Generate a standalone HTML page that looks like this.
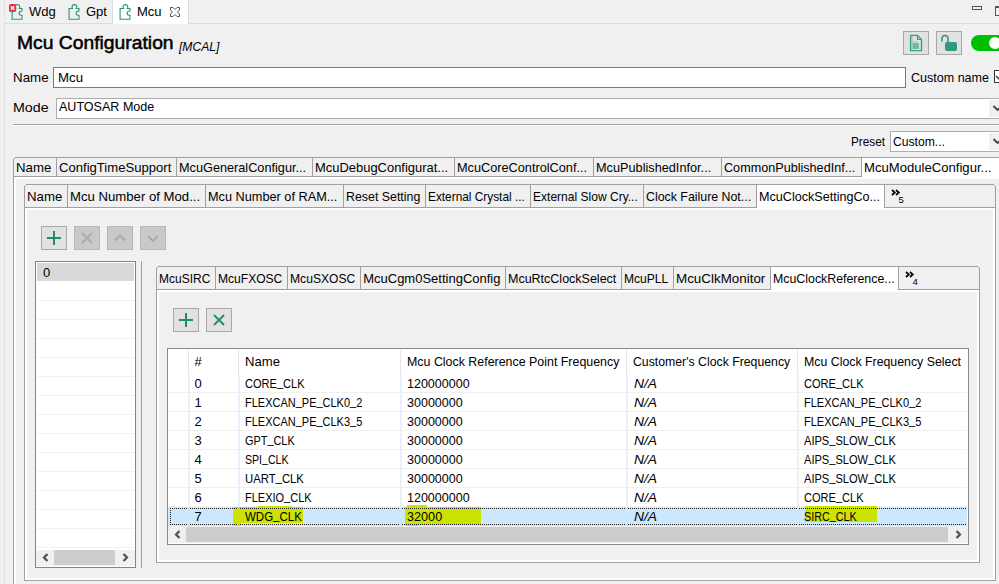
<!DOCTYPE html><html><head><meta charset="utf-8"><style>
html,body{margin:0;padding:0}
body{width:999px;height:584px;overflow:hidden;background:#f0f0f0;position:relative;font-family:"Liberation Sans",sans-serif;color:#000}
.a{position:absolute}
.t,.tab{position:absolute;white-space:nowrap;line-height:1;transform-origin:0 0}
</style></head><body>

<div class="a" style="left:4px;top:0px;width:1px;height:584px;background:#e3e3e3"></div>
<div class="a" style="left:5px;top:23px;width:994px;height:1px;background:#dcdcdc"></div>
<div class="a" style="left:113px;top:0px;width:75px;height:24px;background:#fff"></div>
<div class="a" style="left:112px;top:0px;width:1px;height:24px;background:#dcdcdc"></div>
<div class="a" style="left:188px;top:0px;width:1px;height:24px;background:#dcdcdc"></div>
<svg class="a" style="left:10px;top:3px;overflow:visible" width="16" height="18" viewBox="0 0 16 18"><path d="M2.1 16.3V5.5H5.6C5.3 5 4.8 4.5 5 3.5C5.2 2 6.2 1.6 7.4 1.6C8.6 1.6 9.6 2 9.8 3.5C10 4.5 9.5 5 9.2 5.5H12V8C10.4 8 9.1 9 9.1 10.3C9.1 11.6 10.4 12.5 12 12.5V16.3Z" fill="none" stroke="#2a9478" stroke-width="1.1"/><rect x="-1" y="1" width="7.2" height="8" rx="1.8" fill="#dc3545"/><path d="M0.9 3.3L4.3 6.7M4.3 3.3L0.9 6.7" stroke="#fff" stroke-width="1.3"/></svg>
<svg class="a" style="left:67px;top:3px;overflow:visible" width="16" height="18" viewBox="0 0 16 18"><path d="M2.1 16.3V5.5H5.6C5.3 5 4.8 4.5 5 3.5C5.2 2 6.2 1.6 7.4 1.6C8.6 1.6 9.6 2 9.8 3.5C10 4.5 9.5 5 9.2 5.5H12V8C10.4 8 9.1 9 9.1 10.3C9.1 11.6 10.4 12.5 12 12.5V16.3Z" fill="none" stroke="#2a9478" stroke-width="1.1"/></svg>
<svg class="a" style="left:118px;top:3px;overflow:visible" width="16" height="18" viewBox="0 0 16 18"><path d="M2.1 16.3V5.5H5.6C5.3 5 4.8 4.5 5 3.5C5.2 2 6.2 1.6 7.4 1.6C8.6 1.6 9.6 2 9.8 3.5C10 4.5 9.5 5 9.2 5.5H12V8C10.4 8 9.1 9 9.1 10.3C9.1 11.6 10.4 12.5 12 12.5V16.3Z" fill="none" stroke="#2a9478" stroke-width="1.1"/></svg>
<svg class="a" style="left:169px;top:6px" width="12" height="12" viewBox="0 0 12 12"><path d="M1.5 1.5H4L6 3.5L8 1.5H10.5V4L8.5 6L10.5 8V10.5H8L6 8.5L4 10.5H1.5V8L3.5 6L1.5 4Z" fill="none" stroke="#555" stroke-width="1"/></svg>
<div class="a" style="left:972px;top:6px;width:10px;height:4px;border:1px solid #555;box-sizing:border-box"></div>
<div class="a" style="left:995px;top:6px;width:10px;height:10px;border:1px solid #555;border-top-width:2px;box-sizing:border-box"></div>
<div class="a" style="left:903px;top:31px;width:26px;height:24px;background:#e1e1e1;border:1px solid #a8a8a8;box-sizing:border-box"></div>
<div class="a" style="left:936px;top:31px;width:26px;height:24px;background:#e1e1e1;border:1px solid #a8a8a8;box-sizing:border-box"></div>
<svg class="a" style="left:909px;top:34px" width="14" height="18" viewBox="0 0 14 18"><path d="M1.6 1.4H8.5L12.5 5.5V16.6H1.6Z" fill="none" stroke="#3d9f86" stroke-width="1.4"/><path d="M8.5 1.5V5.5H12.5" fill="none" stroke="#3d9f86" stroke-width="1.2"/><rect x="2.3" y="2.2" width="1.2" height="13.6" fill="#8ccab8"/><rect x="3.7" y="9" width="6.2" height="6" fill="#6fb9a4"/><rect x="2.4" y="7.3" width="6" height="1.3" fill="#9fcfc1"/></svg>
<svg class="a" style="left:940px;top:34px" width="18" height="18" viewBox="0 0 18 18"><path d="M2 7.6V4.5A3 3 0 0 1 8 4.5V8" fill="none" stroke="#2e9a80" stroke-width="1.6"/><rect x="5" y="8" width="12" height="9" rx="2" fill="#2e9a80"/></svg>
<div class="a" style="left:971px;top:35px;width:60px;height:16px;background:#00bf00;border-radius:8px"></div>
<div class="a" style="left:989px;top:37px;width:12px;height:12px;background:#fff;border-radius:6px"></div>
<div class="a" style="left:53px;top:67px;width:853px;height:21px;background:#fff;border:1px solid #7a7a7a;box-sizing:border-box"></div>
<div class="a" style="left:994px;top:70px;width:13px;height:13px;background:#fff;border:1px solid #333;box-sizing:border-box"></div>
<svg class="a" style="left:995px;top:71px" width="11" height="11"><path d="M1 5L4 8L10 2" fill="none" stroke="#333" stroke-width="1.3"/></svg>
<div class="a" style="left:56px;top:98px;width:950px;height:21px;background:#fff;border:1px solid #adadad;box-sizing:border-box"></div>
<div class="a" style="left:989px;top:100px;width:20px;height:17px;background:#f0f0f0"></div>
<svg class="a" style="left:992px;top:104px" width="10" height="9"><path d="M1.5 2L5.5 6L9.5 2" fill="none" stroke="#444" stroke-width="1.8"/></svg>
<div class="a" style="left:13px;top:124px;width:986px;height:1px;background:#a0a0a0"></div>
<div class="a" style="left:13px;top:125px;width:986px;height:1px;background:#fff"></div>
<div class="a" style="left:890px;top:131px;width:130px;height:21px;background:#fff;border:1px solid #adadad;box-sizing:border-box"></div>
<div class="a" style="left:989px;top:133px;width:20px;height:17px;background:#f0f0f0"></div>
<svg class="a" style="left:992px;top:137px" width="10" height="9"><path d="M1.5 2L5.5 6L9.5 2" fill="none" stroke="#444" stroke-width="1.8"/></svg>
<div class="a" style="left:15px;top:157px;width:994px;height:1px;background:#a0a0a0"></div>
<div class="a" style="left:14px;top:158px;width:1px;height:1px;background:#a0a0a0"></div>
<div class="a" style="left:1009px;top:158px;width:1px;height:1px;background:#a0a0a0"></div>
<div class="a" style="left:13px;top:159px;width:1px;height:442px;background:#a0a0a0"></div>
<div class="a" style="left:1010px;top:159px;width:1px;height:442px;background:#a0a0a0"></div>
<div class="a" style="left:13px;top:600px;width:998px;height:1px;background:#a0a0a0"></div>
<div class="a" style="left:14px;top:177px;width:996px;height:1px;background:#fff"></div>
<div class="a" style="left:14px;top:178px;width:996px;height:1px;background:#fff"></div>
<div class="a" style="left:14px;top:177px;width:1px;height:423px;background:#fff"></div>
<div class="a" style="left:15px;top:177px;width:1px;height:423px;background:#fff"></div>
<div class="a" style="left:1009px;top:177px;width:1px;height:423px;background:#fff"></div>
<div class="a" style="left:1008px;top:177px;width:1px;height:423px;background:#fff"></div>
<div class="a" style="left:14px;top:599px;width:996px;height:1px;background:#fff"></div>
<div class="a" style="left:14px;top:598px;width:996px;height:1px;background:#fff"></div>
<div class="a" style="left:13px;top:176px;width:848px;height:1px;background:#a0a0a0"></div>
<div class="a" style="left:1010px;top:176px;width:0px;height:1px;background:#a0a0a0"></div>
<div class="a" style="left:862px;top:158px;width:148px;height:21px;background:#fff"></div>
<div class="a" style="left:56px;top:158px;width:1px;height:19px;background:#a0a0a0"></div>
<div class="a" style="left:176px;top:158px;width:1px;height:19px;background:#a0a0a0"></div>
<div class="a" style="left:312px;top:158px;width:1px;height:19px;background:#a0a0a0"></div>
<div class="a" style="left:454px;top:158px;width:1px;height:19px;background:#a0a0a0"></div>
<div class="a" style="left:593px;top:158px;width:1px;height:19px;background:#a0a0a0"></div>
<div class="a" style="left:721px;top:158px;width:1px;height:19px;background:#a0a0a0"></div>
<div class="a" style="left:861px;top:158px;width:1px;height:19px;background:#a0a0a0"></div>
<div class="a" style="left:26px;top:184px;width:968px;height:1px;background:#a0a0a0"></div>
<div class="a" style="left:25px;top:185px;width:1px;height:1px;background:#a0a0a0"></div>
<div class="a" style="left:994px;top:185px;width:1px;height:1px;background:#a0a0a0"></div>
<div class="a" style="left:24px;top:186px;width:1px;height:395px;background:#a0a0a0"></div>
<div class="a" style="left:995px;top:186px;width:1px;height:395px;background:#a0a0a0"></div>
<div class="a" style="left:24px;top:580px;width:972px;height:1px;background:#a0a0a0"></div>
<div class="a" style="left:25px;top:208px;width:970px;height:1px;background:#fff"></div>
<div class="a" style="left:25px;top:209px;width:970px;height:1px;background:#fff"></div>
<div class="a" style="left:25px;top:208px;width:1px;height:372px;background:#fff"></div>
<div class="a" style="left:26px;top:208px;width:1px;height:372px;background:#fff"></div>
<div class="a" style="left:994px;top:208px;width:1px;height:372px;background:#fff"></div>
<div class="a" style="left:993px;top:208px;width:1px;height:372px;background:#fff"></div>
<div class="a" style="left:25px;top:579px;width:970px;height:1px;background:#fff"></div>
<div class="a" style="left:25px;top:578px;width:970px;height:1px;background:#fff"></div>
<div class="a" style="left:24px;top:207px;width:732px;height:1px;background:#a0a0a0"></div>
<div class="a" style="left:884px;top:207px;width:111px;height:1px;background:#a0a0a0"></div>
<div class="a" style="left:757px;top:185px;width:127px;height:25px;background:#fff"></div>
<div class="a" style="left:67px;top:185px;width:1px;height:23px;background:#a0a0a0"></div>
<div class="a" style="left:205px;top:185px;width:1px;height:23px;background:#a0a0a0"></div>
<div class="a" style="left:343px;top:185px;width:1px;height:23px;background:#a0a0a0"></div>
<div class="a" style="left:425px;top:185px;width:1px;height:23px;background:#a0a0a0"></div>
<div class="a" style="left:530px;top:185px;width:1px;height:23px;background:#a0a0a0"></div>
<div class="a" style="left:643px;top:185px;width:1px;height:23px;background:#a0a0a0"></div>
<div class="a" style="left:756px;top:185px;width:1px;height:23px;background:#a0a0a0"></div>
<div class="a" style="left:884px;top:185px;width:1px;height:23px;background:#a0a0a0"></div>
<svg class="a" style="left:891px;top:189px" width="10" height="7"><path d="M1 1L3.8 3.5L1 6M5 1L7.8 3.5L5 6" fill="none" stroke="#000" stroke-width="1.7"/></svg>
<div class="a" style="left:41px;top:226px;width:26px;height:24px;background:#e1e1e1;border:1px solid #a8a8a8;box-sizing:border-box"></div>
<svg class="a" style="left:41px;top:226px" width="26" height="24"><path d="M13 5V19M6 12H20" stroke="#1f8c70" stroke-width="2"/></svg>
<div class="a" style="left:74px;top:226px;width:26px;height:24px;background:#c9c9c9;border:1px solid #b8b8b8;box-sizing:border-box"></div>
<svg class="a" style="left:74px;top:226px" width="26" height="24"><path d="M8 7L18 17M18 7L8 17" stroke="#ababab" stroke-width="1.8"/></svg>
<div class="a" style="left:107px;top:226px;width:26px;height:24px;background:#c9c9c9;border:1px solid #b8b8b8;box-sizing:border-box"></div>
<svg class="a" style="left:107px;top:226px" width="26" height="24"><path d="M8 14.5L13 9.5L18 14.5" fill="none" stroke="#ababab" stroke-width="2"/></svg>
<div class="a" style="left:140px;top:226px;width:26px;height:24px;background:#c9c9c9;border:1px solid #b8b8b8;box-sizing:border-box"></div>
<svg class="a" style="left:140px;top:226px" width="26" height="24"><path d="M8 10L13 15L18 10" fill="none" stroke="#ababab" stroke-width="2"/></svg>
<div class="a" style="left:35px;top:261px;width:101px;height:307px;background:#fff;border:1px solid #7f858e;box-sizing:border-box"></div>
<div class="a" style="left:37px;top:263px;width:97px;height:18px;background:#d9d9d9"></div>
<div class="a" style="left:37px;top:300px;width:97px;height:1px;background:#f0f0f0"></div>
<div class="a" style="left:37px;top:319px;width:97px;height:1px;background:#f0f0f0"></div>
<div class="a" style="left:37px;top:338px;width:97px;height:1px;background:#f0f0f0"></div>
<div class="a" style="left:37px;top:357px;width:97px;height:1px;background:#f0f0f0"></div>
<div class="a" style="left:37px;top:376px;width:97px;height:1px;background:#f0f0f0"></div>
<div class="a" style="left:37px;top:395px;width:97px;height:1px;background:#f0f0f0"></div>
<div class="a" style="left:37px;top:414px;width:97px;height:1px;background:#f0f0f0"></div>
<div class="a" style="left:37px;top:433px;width:97px;height:1px;background:#f0f0f0"></div>
<div class="a" style="left:37px;top:452px;width:97px;height:1px;background:#f0f0f0"></div>
<div class="a" style="left:37px;top:471px;width:97px;height:1px;background:#f0f0f0"></div>
<div class="a" style="left:37px;top:490px;width:97px;height:1px;background:#f0f0f0"></div>
<div class="a" style="left:37px;top:509px;width:97px;height:1px;background:#f0f0f0"></div>
<div class="a" style="left:37px;top:528px;width:97px;height:1px;background:#f0f0f0"></div>
<div class="a" style="left:37px;top:547px;width:97px;height:1px;background:#f0f0f0"></div>
<div class="a" style="left:36px;top:550px;width:99px;height:16px;background:#f0f0f0"></div>
<div class="a" style="left:54px;top:550px;width:61px;height:15px;background:#cdcdcd"></div>
<svg class="a" style="left:36px;top:549px" width="18" height="17"><path d="M11.5 5L8 8.5L11.5 12" fill="none" stroke="#505050" stroke-width="2.2"/></svg>
<svg class="a" style="left:117px;top:549px" width="18" height="17"><path d="M6.5 5L10 8.5L6.5 12" fill="none" stroke="#505050" stroke-width="2.2"/></svg>
<div class="a" style="left:141px;top:261px;width:1px;height:307px;background:#a0a0a0"></div>
<div class="a" style="left:158px;top:266px;width:820px;height:1px;background:#a0a0a0"></div>
<div class="a" style="left:157px;top:267px;width:1px;height:1px;background:#a0a0a0"></div>
<div class="a" style="left:978px;top:267px;width:1px;height:1px;background:#a0a0a0"></div>
<div class="a" style="left:156px;top:268px;width:1px;height:295px;background:#a0a0a0"></div>
<div class="a" style="left:979px;top:268px;width:1px;height:295px;background:#a0a0a0"></div>
<div class="a" style="left:156px;top:562px;width:824px;height:1px;background:#a0a0a0"></div>
<div class="a" style="left:157px;top:290px;width:822px;height:1px;background:#fff"></div>
<div class="a" style="left:157px;top:291px;width:822px;height:1px;background:#fff"></div>
<div class="a" style="left:157px;top:290px;width:1px;height:272px;background:#fff"></div>
<div class="a" style="left:158px;top:290px;width:1px;height:272px;background:#fff"></div>
<div class="a" style="left:978px;top:290px;width:1px;height:272px;background:#fff"></div>
<div class="a" style="left:977px;top:290px;width:1px;height:272px;background:#fff"></div>
<div class="a" style="left:157px;top:561px;width:822px;height:1px;background:#fff"></div>
<div class="a" style="left:157px;top:560px;width:822px;height:1px;background:#fff"></div>
<div class="a" style="left:156px;top:289px;width:614px;height:1px;background:#a0a0a0"></div>
<div class="a" style="left:898px;top:289px;width:81px;height:1px;background:#a0a0a0"></div>
<div class="a" style="left:771px;top:267px;width:127px;height:25px;background:#fff"></div>
<div class="a" style="left:215px;top:267px;width:1px;height:23px;background:#a0a0a0"></div>
<div class="a" style="left:287px;top:267px;width:1px;height:23px;background:#a0a0a0"></div>
<div class="a" style="left:360px;top:267px;width:1px;height:23px;background:#a0a0a0"></div>
<div class="a" style="left:505px;top:267px;width:1px;height:23px;background:#a0a0a0"></div>
<div class="a" style="left:621px;top:267px;width:1px;height:23px;background:#a0a0a0"></div>
<div class="a" style="left:673px;top:267px;width:1px;height:23px;background:#a0a0a0"></div>
<div class="a" style="left:770px;top:267px;width:1px;height:23px;background:#a0a0a0"></div>
<div class="a" style="left:898px;top:267px;width:1px;height:23px;background:#a0a0a0"></div>
<svg class="a" style="left:905px;top:271px" width="10" height="7"><path d="M1 1L3.8 3.5L1 6M5 1L7.8 3.5L5 6" fill="none" stroke="#000" stroke-width="1.7"/></svg>
<div class="a" style="left:173px;top:308px;width:26px;height:24px;background:#e1e1e1;border:1px solid #a8a8a8;box-sizing:border-box"></div>
<svg class="a" style="left:173px;top:308px" width="26" height="24"><path d="M13 5V19M6 12H20" stroke="#1f8c70" stroke-width="2"/></svg>
<div class="a" style="left:206px;top:308px;width:26px;height:24px;background:#e1e1e1;border:1px solid #a8a8a8;box-sizing:border-box"></div>
<svg class="a" style="left:206px;top:308px" width="26" height="24"><path d="M8 7L18 17M18 7L8 17" stroke="#1f8c70" stroke-width="1.8"/></svg>
<div class="a" style="left:167px;top:348px;width:802px;height:197px;background:#fff;border:1px solid #828790;box-sizing:border-box"></div>
<div class="a" style="left:188px;top:350px;width:1px;height:24px;background:#e5e5e5"></div>
<div class="a" style="left:238px;top:350px;width:1px;height:24px;background:#e5e5e5"></div>
<div class="a" style="left:400px;top:350px;width:1px;height:24px;background:#e5e5e5"></div>
<div class="a" style="left:626px;top:350px;width:1px;height:24px;background:#e5e5e5"></div>
<div class="a" style="left:797px;top:350px;width:1px;height:24px;background:#e5e5e5"></div>
<div class="a" style="left:168px;top:392px;width:799px;height:1px;background:#f0f0f0"></div>
<div class="a" style="left:168px;top:411px;width:799px;height:1px;background:#f0f0f0"></div>
<div class="a" style="left:168px;top:430px;width:799px;height:1px;background:#f0f0f0"></div>
<div class="a" style="left:168px;top:449px;width:799px;height:1px;background:#f0f0f0"></div>
<div class="a" style="left:168px;top:468px;width:799px;height:1px;background:#f0f0f0"></div>
<div class="a" style="left:168px;top:487px;width:799px;height:1px;background:#f0f0f0"></div>
<div class="a" style="left:168px;top:506px;width:799px;height:1px;background:#f0f0f0"></div>
<div class="a" style="left:188px;top:374px;width:1px;height:151px;background:#e8f1fb"></div>
<div class="a" style="left:189px;top:374px;width:1px;height:151px;background:#f0f0f0"></div>
<div class="a" style="left:238px;top:374px;width:1px;height:151px;background:#e8f1fb"></div>
<div class="a" style="left:239px;top:374px;width:1px;height:151px;background:#f0f0f0"></div>
<div class="a" style="left:400px;top:374px;width:1px;height:151px;background:#e8f1fb"></div>
<div class="a" style="left:401px;top:374px;width:1px;height:151px;background:#f0f0f0"></div>
<div class="a" style="left:626px;top:374px;width:1px;height:151px;background:#e8f1fb"></div>
<div class="a" style="left:627px;top:374px;width:1px;height:151px;background:#f0f0f0"></div>
<div class="a" style="left:797px;top:374px;width:1px;height:151px;background:#e8f1fb"></div>
<div class="a" style="left:798px;top:374px;width:1px;height:151px;background:#f0f0f0"></div>
<div class="a" style="left:168px;top:507px;width:799px;height:19px;background:#cce8ff"></div>
<div class="a" style="left:233px;top:507px;width:8px;height:19px;background:#cce200"></div>
<div class="a" style="left:240px;top:507px;width:63px;height:16px;background:#cce200"></div>
<div class="a" style="left:258px;top:506px;width:34px;height:2px;background:#cce200"></div>
<div class="a" style="left:405px;top:507px;width:76px;height:18px;background:#cce200"></div>
<div class="a" style="left:407px;top:505px;width:20px;height:2px;background:#cce200"></div>
<div class="a" style="left:406px;top:525px;width:12px;height:1px;background:#cce200"></div>
<div class="a" style="left:805px;top:506px;width:72px;height:16px;background:#cce200"></div>
<div class="a" style="left:170px;top:508px;width:18px;height:1px;background-image:linear-gradient(90deg,#222 50%,transparent 50%);background-size:2px 1px"></div>
<div class="a" style="left:170px;top:524px;width:18px;height:1px;background-image:linear-gradient(90deg,#222 50%,transparent 50%);background-size:2px 1px"></div>
<div class="a" style="left:190px;top:508px;width:48px;height:1px;background-image:linear-gradient(90deg,#222 50%,transparent 50%);background-size:2px 1px"></div>
<div class="a" style="left:190px;top:524px;width:48px;height:1px;background-image:linear-gradient(90deg,#222 50%,transparent 50%);background-size:2px 1px"></div>
<div class="a" style="left:240px;top:508px;width:160px;height:1px;background-image:linear-gradient(90deg,#222 50%,transparent 50%);background-size:2px 1px"></div>
<div class="a" style="left:240px;top:524px;width:160px;height:1px;background-image:linear-gradient(90deg,#222 50%,transparent 50%);background-size:2px 1px"></div>
<div class="a" style="left:402px;top:508px;width:224px;height:1px;background-image:linear-gradient(90deg,#222 50%,transparent 50%);background-size:2px 1px"></div>
<div class="a" style="left:402px;top:524px;width:224px;height:1px;background-image:linear-gradient(90deg,#222 50%,transparent 50%);background-size:2px 1px"></div>
<div class="a" style="left:628px;top:508px;width:169px;height:1px;background-image:linear-gradient(90deg,#222 50%,transparent 50%);background-size:2px 1px"></div>
<div class="a" style="left:628px;top:524px;width:169px;height:1px;background-image:linear-gradient(90deg,#222 50%,transparent 50%);background-size:2px 1px"></div>
<div class="a" style="left:799px;top:508px;width:168px;height:1px;background-image:linear-gradient(90deg,#222 50%,transparent 50%);background-size:2px 1px"></div>
<div class="a" style="left:799px;top:524px;width:168px;height:1px;background-image:linear-gradient(90deg,#222 50%,transparent 50%);background-size:2px 1px"></div>
<div class="a" style="left:170px;top:508px;width:1px;height:17px;background-image:linear-gradient(180deg,#222 50%,transparent 50%);background-size:1px 2px"></div>
<div class="a" style="left:168px;top:526px;width:800px;height:17px;background:#f0f0f0"></div>
<div class="a" style="left:186px;top:527px;width:762px;height:15px;background:#cdcdcd"></div>
<svg class="a" style="left:168px;top:526px" width="18" height="17"><path d="M11.5 5L8 8.5L11.5 12" fill="none" stroke="#505050" stroke-width="2.2"/></svg>
<svg class="a" style="left:950px;top:526px" width="18" height="17"><path d="M6.5 5L10 8.5L6.5 12" fill="none" stroke="#505050" stroke-width="2.2"/></svg>
<div id="t0" class="t" style="left:29.00px;top:5.20px;font-size:13px;;">Wdg</div>
<div id="t1" class="t" style="left:86.00px;top:5.20px;font-size:13px;;">Gpt</div>
<div id="t2" class="t" style="left:137.00px;top:5.20px;font-size:13px;;">Mcu</div>
<div id="t3" class="t" style="left:16.50px;top:34.26px;font-size:18px;-webkit-text-stroke:0.5px #000;transform:scaleX(1.0720);">Mcu Configuration</div>
<div id="t4" class="t" style="left:178.50px;top:40.84px;font-size:12px;font-style:italic;transform:scaleX(1.0121);">[MCAL]</div>
<div id="t5" class="t" style="left:13.40px;top:71.00px;font-size:13px;;transform:scaleX(1.0263);">Name</div>
<div id="t6" class="t" style="left:57.50px;top:70.70px;font-size:13px;;transform:scaleX(1.0178);">Mcu</div>
<div id="t7" class="t" style="left:911.40px;top:71.00px;font-size:13px;;transform:scaleX(0.9639);">Custom name</div>
<div id="t8" class="t" style="left:13.40px;top:100.80px;font-size:13px;;transform:scaleX(1.0943);">Mode</div>
<div id="t9" class="t" style="left:59.00px;top:100.40px;font-size:13px;;transform:scaleX(0.9651);">AUTOSAR Mode</div>
<div id="t10" class="t" style="left:851.00px;top:134.70px;font-size:13px;;transform:scaleX(0.9048);">Preset</div>
<div id="t11" class="t" style="left:893.00px;top:134.50px;font-size:13px;;transform:scaleX(0.9348);">Custom...</div>
<div id="t12" class="tab" style="left:16.20px;top:160.80px;font-size:13px;;transform:scaleX(1.0177);">Name</div>
<div id="t13" class="tab" style="left:59.20px;top:160.80px;font-size:13px;;transform:scaleX(1.0070);">ConfigTimeSupport</div>
<div id="t14" class="tab" style="left:179.20px;top:160.80px;font-size:13px;;transform:scaleX(0.9771);">McuGeneralConfigur...</div>
<div id="t15" class="tab" style="left:315.20px;top:160.80px;font-size:13px;;transform:scaleX(0.9956);">McuDebugConfigurat...</div>
<div id="t16" class="tab" style="left:457.20px;top:160.80px;font-size:13px;;transform:scaleX(0.9785);">McuCoreControlConf...</div>
<div id="t17" class="tab" style="left:596.20px;top:160.80px;font-size:13px;;transform:scaleX(0.9780);">McuPublishedInfor...</div>
<div id="t18" class="tab" style="left:724.20px;top:160.80px;font-size:13px;;transform:scaleX(0.9710);">CommonPublishedInf...</div>
<div id="t19" class="tab" style="left:864.20px;top:160.80px;font-size:13px;;transform:scaleX(1.0083);">McuModuleConfigur...</div>
<div id="t20" class="tab" style="left:27.20px;top:189.80px;font-size:13px;;transform:scaleX(1.0177);">Name</div>
<div id="t21" class="tab" style="left:70.20px;top:189.80px;font-size:13px;;transform:scaleX(1.0116);">Mcu Number of Mod...</div>
<div id="t22" class="tab" style="left:208.20px;top:189.80px;font-size:13px;;transform:scaleX(0.9788);">Mcu Number of RAM...</div>
<div id="t23" class="tab" style="left:346.20px;top:189.80px;font-size:13px;;transform:scaleX(0.9520);">Reset Setting</div>
<div id="t24" class="tab" style="left:428.20px;top:189.80px;font-size:13px;;transform:scaleX(0.9115);">External Crystal ...</div>
<div id="t25" class="tab" style="left:533.20px;top:189.80px;font-size:13px;;transform:scaleX(0.9259);">External Slow Cry...</div>
<div id="t26" class="tab" style="left:646.20px;top:189.80px;font-size:13px;;transform:scaleX(0.9507);">Clock Failure Not...</div>
<div id="t27" class="tab" style="left:759.20px;top:189.80px;font-size:13px;;transform:scaleX(0.9688);">McuClockSettingCo...</div>
<div id="t28" class="t" style="left:898.60px;top:194.76px;font-size:9.5px;;">5</div>
<div id="t29" class="t" style="left:43.00px;top:266.00px;font-size:13px;;">0</div>
<div id="t30" class="tab" style="left:159.20px;top:271.80px;font-size:13px;;transform:scaleX(0.9222);">McuSIRC</div>
<div id="t31" class="tab" style="left:218.20px;top:271.80px;font-size:13px;;transform:scaleX(0.9273);">McuFXOSC</div>
<div id="t32" class="tab" style="left:290.20px;top:271.80px;font-size:13px;;transform:scaleX(0.9318);">McuSXOSC</div>
<div id="t33" class="tab" style="left:363.20px;top:271.80px;font-size:13px;;transform:scaleX(1.0000);">McuCgm0SettingConfig</div>
<div id="t34" class="tab" style="left:508.20px;top:271.80px;font-size:13px;;transform:scaleX(0.9609);">McuRtcClockSelect</div>
<div id="t35" class="tab" style="left:624.20px;top:271.80px;font-size:13px;;transform:scaleX(0.9287);">McuPLL</div>
<div id="t36" class="tab" style="left:676.20px;top:271.80px;font-size:13px;;transform:scaleX(1.0301);">McuClkMonitor</div>
<div id="t37" class="tab" style="left:773.20px;top:271.80px;font-size:13px;;transform:scaleX(0.9508);">McuClockReference...</div>
<div id="t38" class="t" style="left:912.60px;top:276.76px;font-size:9.5px;;">4</div>
<div id="t39" class="t" style="left:194.50px;top:354.50px;font-size:13px;;">#</div>
<div id="t40" class="t" style="left:244.60px;top:354.50px;font-size:13px;;transform:scaleX(1.0090);">Name</div>
<div id="t41" class="t" style="left:406.60px;top:354.50px;font-size:13px;;transform:scaleX(0.9544);">Mcu Clock Reference Point Frequency</div>
<div id="t42" class="t" style="left:632.60px;top:354.50px;font-size:13px;;transform:scaleX(0.9442);">Customer's Clock Frequency</div>
<div id="t43" class="t" style="left:803.50px;top:354.50px;font-size:13px;;transform:scaleX(0.9489);">Mcu Clock Frequency Select</div>
<div id="t44" class="t" style="left:194.50px;top:376.70px;font-size:13px;;">0</div>
<div id="t45" class="t" style="left:244.60px;top:376.70px;font-size:13px;;transform:scaleX(0.8503);">CORE<span style="position:relative;top:-1.5px">_</span>CLK</div>
<div id="t46" class="t" style="left:406.60px;top:376.70px;font-size:13px;;transform:scaleX(0.9619);">120000000</div>
<div id="t47" class="t" style="left:633.60px;top:376.70px;font-size:13px;font-style:italic;transform:scaleX(1.0659);">N/A</div>
<div id="t48" class="t" style="left:803.50px;top:376.70px;font-size:13px;;transform:scaleX(0.8503);">CORE<span style="position:relative;top:-1.5px">_</span>CLK</div>
<div id="t49" class="t" style="left:194.50px;top:395.70px;font-size:13px;;">1</div>
<div id="t50" class="t" style="left:244.60px;top:395.70px;font-size:13px;;transform:scaleX(0.8452);">FLEXCAN<span style="position:relative;top:-1.5px">_</span>PE<span style="position:relative;top:-1.5px">_</span>CLK0<span style="position:relative;top:-1.5px">_</span>2</div>
<div id="t51" class="t" style="left:406.60px;top:395.70px;font-size:13px;;transform:scaleX(0.9629);">30000000</div>
<div id="t52" class="t" style="left:633.60px;top:395.70px;font-size:13px;font-style:italic;transform:scaleX(1.0659);">N/A</div>
<div id="t53" class="t" style="left:803.50px;top:395.70px;font-size:13px;;transform:scaleX(0.8452);">FLEXCAN<span style="position:relative;top:-1.5px">_</span>PE<span style="position:relative;top:-1.5px">_</span>CLK0<span style="position:relative;top:-1.5px">_</span>2</div>
<div id="t54" class="t" style="left:194.50px;top:414.70px;font-size:13px;;">2</div>
<div id="t55" class="t" style="left:244.60px;top:414.70px;font-size:13px;;transform:scaleX(0.8452);">FLEXCAN<span style="position:relative;top:-1.5px">_</span>PE<span style="position:relative;top:-1.5px">_</span>CLK3<span style="position:relative;top:-1.5px">_</span>5</div>
<div id="t56" class="t" style="left:406.60px;top:414.70px;font-size:13px;;transform:scaleX(0.9629);">30000000</div>
<div id="t57" class="t" style="left:633.60px;top:414.70px;font-size:13px;font-style:italic;transform:scaleX(1.0659);">N/A</div>
<div id="t58" class="t" style="left:803.50px;top:414.70px;font-size:13px;;transform:scaleX(0.8452);">FLEXCAN<span style="position:relative;top:-1.5px">_</span>PE<span style="position:relative;top:-1.5px">_</span>CLK3<span style="position:relative;top:-1.5px">_</span>5</div>
<div id="t59" class="t" style="left:194.50px;top:433.70px;font-size:13px;;">3</div>
<div id="t60" class="t" style="left:244.60px;top:433.70px;font-size:13px;;transform:scaleX(0.8386);">GPT<span style="position:relative;top:-1.5px">_</span>CLK</div>
<div id="t61" class="t" style="left:406.60px;top:433.70px;font-size:13px;;transform:scaleX(0.9629);">30000000</div>
<div id="t62" class="t" style="left:633.60px;top:433.70px;font-size:13px;font-style:italic;transform:scaleX(1.0659);">N/A</div>
<div id="t63" class="t" style="left:803.50px;top:433.70px;font-size:13px;;transform:scaleX(0.8525);">AIPS<span style="position:relative;top:-1.5px">_</span>SLOW<span style="position:relative;top:-1.5px">_</span>CLK</div>
<div id="t64" class="t" style="left:194.50px;top:452.70px;font-size:13px;;">4</div>
<div id="t65" class="t" style="left:244.60px;top:452.70px;font-size:13px;;transform:scaleX(0.8131);">SPI<span style="position:relative;top:-1.5px">_</span>CLK</div>
<div id="t66" class="t" style="left:406.60px;top:452.70px;font-size:13px;;transform:scaleX(0.9629);">30000000</div>
<div id="t67" class="t" style="left:633.60px;top:452.70px;font-size:13px;font-style:italic;transform:scaleX(1.0659);">N/A</div>
<div id="t68" class="t" style="left:803.50px;top:452.70px;font-size:13px;;transform:scaleX(0.8525);">AIPS<span style="position:relative;top:-1.5px">_</span>SLOW<span style="position:relative;top:-1.5px">_</span>CLK</div>
<div id="t69" class="t" style="left:194.50px;top:471.70px;font-size:13px;;">5</div>
<div id="t70" class="t" style="left:244.60px;top:471.70px;font-size:13px;;transform:scaleX(0.8702);">UART<span style="position:relative;top:-1.5px">_</span>CLK</div>
<div id="t71" class="t" style="left:406.60px;top:471.70px;font-size:13px;;transform:scaleX(0.9629);">30000000</div>
<div id="t72" class="t" style="left:633.60px;top:471.70px;font-size:13px;font-style:italic;transform:scaleX(1.0659);">N/A</div>
<div id="t73" class="t" style="left:803.50px;top:471.70px;font-size:13px;;transform:scaleX(0.8525);">AIPS<span style="position:relative;top:-1.5px">_</span>SLOW<span style="position:relative;top:-1.5px">_</span>CLK</div>
<div id="t74" class="t" style="left:194.50px;top:490.70px;font-size:13px;;">6</div>
<div id="t75" class="t" style="left:244.60px;top:490.70px;font-size:13px;;transform:scaleX(0.8454);">FLEXIO<span style="position:relative;top:-1.5px">_</span>CLK</div>
<div id="t76" class="t" style="left:406.60px;top:490.70px;font-size:13px;;transform:scaleX(0.9619);">120000000</div>
<div id="t77" class="t" style="left:633.60px;top:490.70px;font-size:13px;font-style:italic;transform:scaleX(1.0659);">N/A</div>
<div id="t78" class="t" style="left:803.50px;top:490.70px;font-size:13px;;transform:scaleX(0.8503);">CORE<span style="position:relative;top:-1.5px">_</span>CLK</div>
<div id="t79" class="t" style="left:194.50px;top:509.70px;font-size:13px;;">7</div>
<div id="t80" class="t" style="left:244.60px;top:509.70px;font-size:13px;;transform:scaleX(0.8832);">WDG<span style="position:relative;top:-1.5px">_</span>CLK</div>
<div id="t81" class="t" style="left:406.60px;top:509.70px;font-size:13px;;transform:scaleX(0.9736);">32000</div>
<div id="t82" class="t" style="left:633.60px;top:509.70px;font-size:13px;font-style:italic;transform:scaleX(1.0659);">N/A</div>
<div id="t83" class="t" style="left:803.50px;top:509.70px;font-size:13px;;transform:scaleX(0.8287);">SIRC<span style="position:relative;top:-1.5px">_</span>CLK</div>
</body></html>
